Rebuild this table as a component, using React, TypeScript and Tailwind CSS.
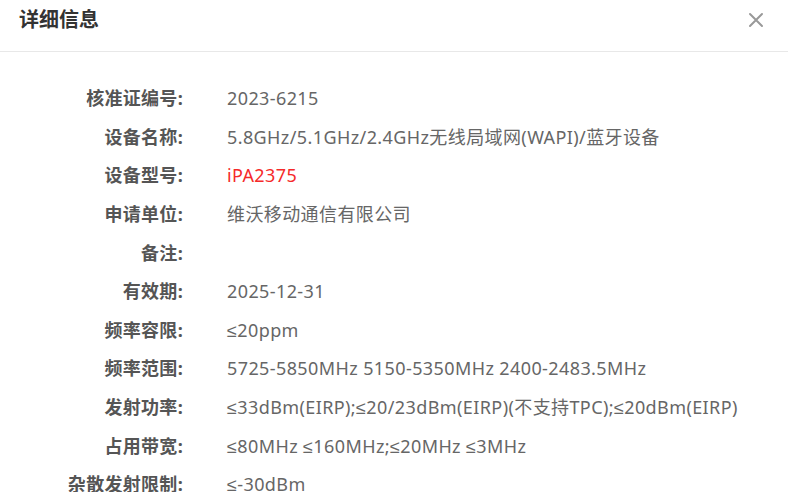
import React from "react";

const rows: { label: string; value: string; red?: boolean }[] = [
  { label: "核准证编号:", value: "2023-6215" },
  { label: "设备名称:", value: "5.8GHz/5.1GHz/2.4GHz无线局域网(WAPI)/蓝牙设备" },
  { label: "设备型号:", value: "iPA2375", red: true },
  { label: "申请单位:", value: "维沃移动通信有限公司" },
  { label: "备注:", value: "" },
  { label: "有效期:", value: "2025-12-31" },
  { label: "频率容限:", value: "≤20ppm" },
  { label: "频率范围:", value: "5725-5850MHz 5150-5350MHz 2400-2483.5MHz" },
  { label: "发射功率:", value: "≤33dBm(EIRP);≤20/23dBm(EIRP)(不支持TPC);≤20dBm(EIRP)" },
  { label: "占用带宽:", value: "≤80MHz ≤160MHz;≤20MHz ≤3MHz" },
  { label: "杂散发射限制:", value: "≤-30dBm" },
];

export default function App() {
  return (
    <div
      className="w-[788px] h-[492px] overflow-hidden bg-white"
      style={{ fontFamily: '"Noto Sans", "Liberation Sans", "Noto Sans CJK SC", sans-serif' }}
    >
      <div className="h-[52px] flex items-center justify-between pl-[19px] pr-[24px] border-b border-[#e8e8e8]">
        <div className="text-[20px] font-bold text-[#333] leading-none -mt-[12px]">详细信息</div>
        <svg width="16" height="16" viewBox="0 0 16 16" className="-mt-[12px]">
          <path d="M2 2 L14 14 M14 2 L2 14" stroke="#999" strokeWidth="2" strokeLinecap="round" fill="none" />
        </svg>
      </div>
      <div className="pt-[27px] flex flex-col">
        {rows.map((r) => (
          <div key={r.label} className="flex items-center h-[38.6px]">
            <div className="w-[183px] shrink-0 text-right text-[18px] font-bold text-[#555] leading-none tracking-[0.3px]">
              {r.label}
            </div>
            <div
              className={
                "pl-[44px] text-[18px] leading-none whitespace-nowrap tracking-[0.4px] " +
                (r.red ? "text-[#f52a2a]" : "text-[#666]")
              }
            >
              {r.value}
            </div>
          </div>
        ))}
      </div>
    </div>
  );
}
